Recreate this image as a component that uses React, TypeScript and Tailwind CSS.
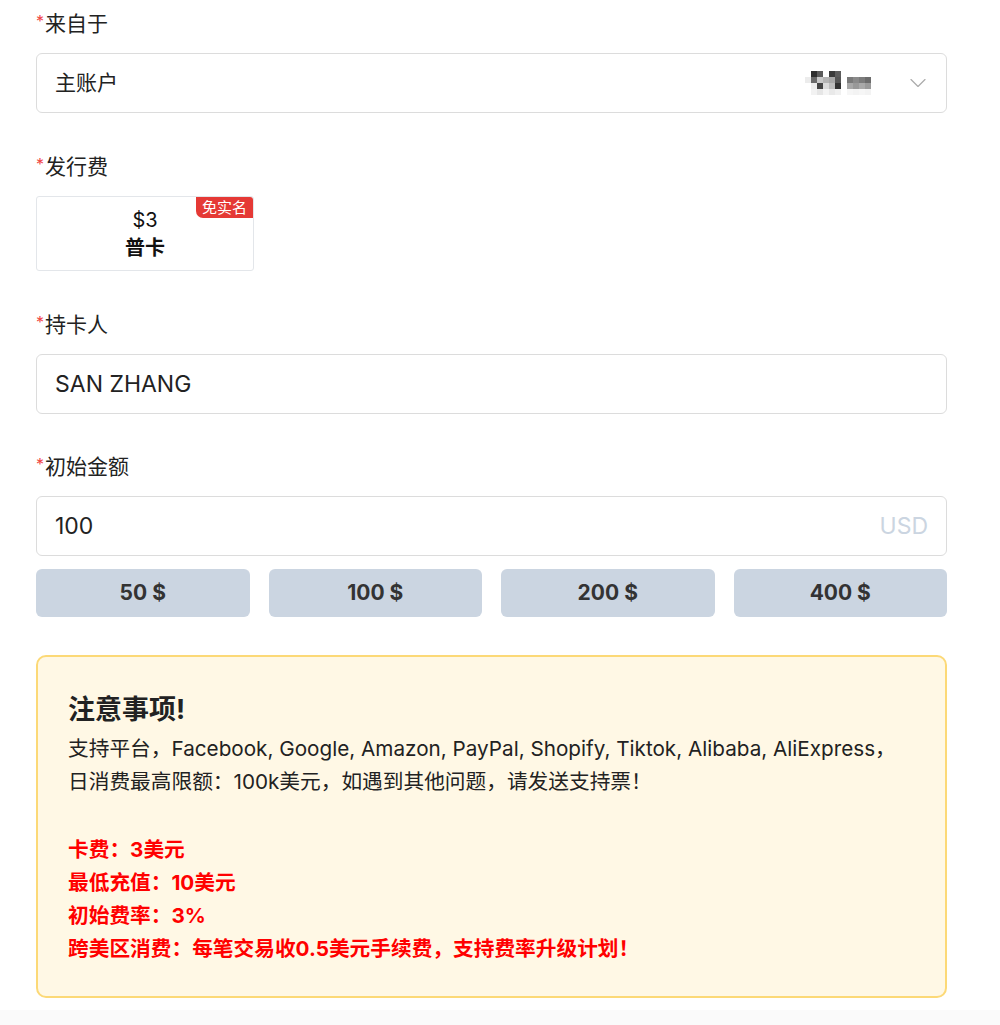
import { ChevronDown } from 'lucide-react';

// blurred account name, rendered as coarse pixel blocks
const mosaic: string[][] = [
  ['bg-white', 'bg-[#2e2e2e]', 'bg-[#5a5a5a]', 'bg-white', 'bg-[#3a3a3a]', 'bg-[#5c5c5c]', 'bg-white', 'bg-white', 'bg-white', 'bg-white', 'bg-white'],
  ['bg-[#ececec]', 'bg-[#6a6a6a]', 'bg-[#c8c8c8]', 'bg-[#b4b4b4]', 'bg-[#a8a8a8]', 'bg-[#555]', 'bg-white', 'bg-[#7a7a7a]', 'bg-[#8a8a8a]', 'bg-[#7c7c7c]', 'bg-[#6c6c6c]'],
  ['bg-white', 'bg-[#ededed]', 'bg-[#444]', 'bg-[#dadada]', 'bg-[#bdbdbd]', 'bg-[#333]', 'bg-white', 'bg-[#a8a8a8]', 'bg-[#999]', 'bg-[#a9a9a9]', 'bg-[#9a9a9a]'],
  ['bg-white', 'bg-[#f2f2f2]', 'bg-[#e6e6e6]', 'bg-[#f4f4f4]', 'bg-[#e9e9e9]', 'bg-[#f0f0f0]', 'bg-white', 'bg-[#f6f6f6]', 'bg-[#f3f3f3]', 'bg-[#f6f6f6]', 'bg-[#f3f3f3]'],
];

const amounts = ['50 $', '100 $', '200 $', '400 $'];

function Label({ text }: { text: string }) {
  return (
    <div className="flex items-center h-[28px] mb-[15px] text-[21px] text-[#222]">
      <span className="text-[#f04545] text-[16px] mr-[1px] -mt-[6px]">*</span>
      <span>{text}</span>
    </div>
  );
}

export default function App() {
  return (
    <div
      className="min-h-screen bg-[#fafafa]"
      style={{ fontFamily: 'Inter, "Noto Sans CJK SC", sans-serif' }}
    >
      <div className="bg-white pl-[36px] pr-[53px] pt-[10px] pb-[12px]">
        {/* 来自于 */}
        <Label text="来自于" />
        <div className="flex items-center h-[60px] rounded-[6px] border border-[#dcdcdc] pl-[18px] pr-[14px] text-[21px] text-[#222]">
          <span className="flex-1">主账户</span>
          <div className="flex flex-col mr-[33px]">
            {mosaic.map((row, i) => (
              <div key={i} className="flex">
                {row.map((c, j) => (
                  <div key={j} className={`w-[6px] h-[6px] ${c}`} />
                ))}
              </div>
            ))}
          </div>
          <ChevronDown size={28} strokeWidth={1} className="text-[#aaaaaa]" />
        </div>

        {/* 发行费 */}
        <div className="mt-[40px]">
          <Label text="发行费" />
          <div className="relative w-[218px] h-[75px] rounded-[3px] border border-[#e3e6ea] flex flex-col items-center justify-center text-[20px] text-[#111] leading-[28px]">
            <span>$3</span>
            <span className="font-bold">普卡</span>
            <span className="absolute top-0 right-0 bg-[#e53935] text-white text-[15px] leading-[21px] px-[6px] rounded-bl-[7px] rounded-tr-[3px]">
              免实名
            </span>
          </div>
        </div>

        {/* 持卡人 */}
        <div className="mt-[40px]">
          <Label text="持卡人" />
          <div className="flex items-center h-[60px] rounded-[6px] border border-[#dcdcdc] px-[18px] text-[23px] text-[#222]">
            SAN ZHANG
          </div>
        </div>

        {/* 初始金额 */}
        <div className="mt-[39px]">
          <Label text="初始金额" />
          <div className="flex items-center h-[60px] rounded-[6px] border border-[#dcdcdc] pl-[18px] pr-[18px] text-[23px]">
            <span className="flex-1 text-[#222]">100</span>
            <span className="text-[#cbd5e1]">USD</span>
          </div>
          <div className="grid grid-cols-4 gap-[19px] mt-[13px]">
            {amounts.map((a) => (
              <div
                key={a}
                className="h-[48px] rounded-[6px] bg-[#cbd5e1] flex items-center justify-center text-[21px] font-bold text-[#333]"
              >
                {a}
              </div>
            ))}
          </div>
        </div>

        {/* 注意事项 */}
        <div className="mt-[38px] rounded-[10px] border-2 border-[#fcd977] bg-[#fff8e5] pl-[30px] pr-[20px] pt-[35px] pb-[31px]">
          <div className="text-[27px] font-bold text-[#222] leading-[36px] mb-[4px]">注意事项!</div>
          <div className="text-[20.7px] leading-[33px] text-[#222]">
            <div>支持平台，Facebook, Google, Amazon, PayPal, Shopify, Tiktok, Alibaba, AliExpress，</div>
            <div>日消费最高限额：100k美元，如遇到其他问题，请发送支持票！</div>
            <div className="h-[35px]" />
            <div className="font-bold text-[#ff0000]">
              <div>卡费：3美元</div>
              <div>最低充值：10美元</div>
              <div>初始费率：3%</div>
              <div>跨美区消费：每笔交易收0.5美元手续费，支持费率升级计划！</div>
            </div>
          </div>
        </div>
      </div>
    </div>
  );
}
